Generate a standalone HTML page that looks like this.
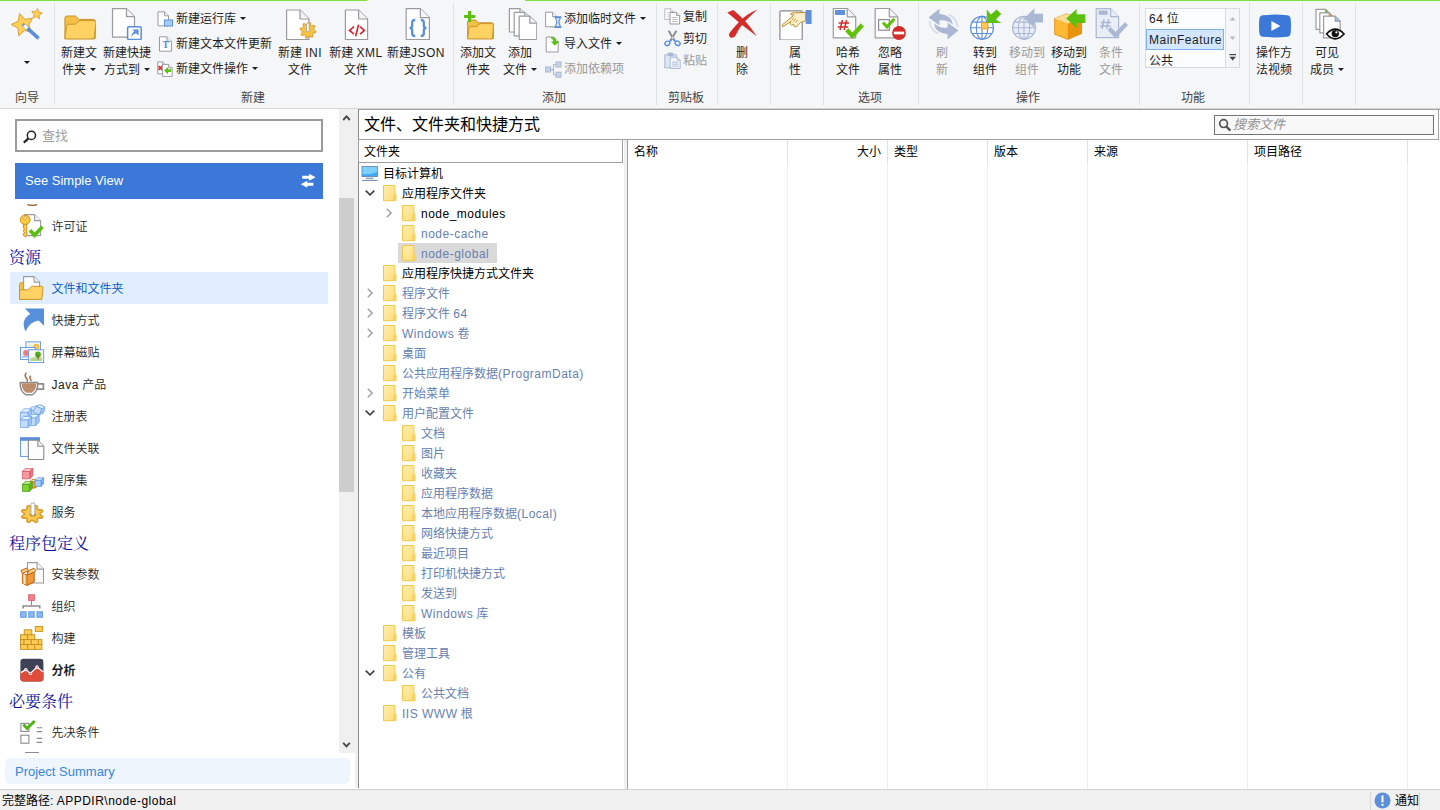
<!DOCTYPE html><html lang="zh-CN"><head><meta charset="utf-8"><title>Advanced Installer</title><style>
*{box-sizing:border-box;margin:0;padding:0}
html,body{width:1440px;height:810px;overflow:hidden;background:#fff}
body{font-family:"Liberation Sans","Noto Sans CJK SC",sans-serif;font-size:12px;color:#1e1e1e;position:relative}
.abs{position:absolute}
i{font-style:normal;letter-spacing:0.5px}
#ribbon{position:absolute;left:0;top:0;width:1440px;height:109px;background:#f5f6f7;border-bottom:1px solid #d4d5d6}
.gl{position:absolute;top:0;height:1px;background:#7fe23c}
.sep{position:absolute;top:3px;width:1px;height:102px;background:#e1e2e4}
.big{position:absolute;top:8px;text-align:center;line-height:17px;font-size:12px;white-space:nowrap;color:#1e1e1e}
.big .ic{display:block;margin:0 auto;height:37px}
.big .ic svg{display:block;margin:0 auto}
.dis{color:#9a9a9a}
.sm{position:absolute;font-size:12px;white-space:nowrap;height:20px;line-height:21px}
.sm svg{position:absolute;left:0;top:2px}
.sm span.t{position:absolute;left:19px;top:0}
.grp{position:absolute;top:90px;height:17px;line-height:17px;font-size:12px;color:#444;text-align:center;white-space:nowrap;transform:translateX(-50%)}
.arr{display:inline-block;width:0;height:0;border-left:3px solid transparent;border-right:3px solid transparent;border-top:3.5px solid #1e1e1e;vertical-align:middle;margin-left:4px;position:relative;top:-1px}
#left{position:absolute;left:0;top:109px;width:355px;height:680px;background:#fff}
#split{position:absolute;left:355px;top:109px;width:3px;height:679px;background:#f0f0f0}
#search{position:absolute;left:15px;top:10px;width:308px;height:33px;border:2px solid #9b9b9b;background:#fff}
#simple{position:absolute;left:15px;top:54px;width:308px;height:36px;background:#3b78d8;color:#fff;font-size:13px;line-height:36px;padding-left:10px}
.li{position:absolute;left:10px;width:318px;height:32px;line-height:34px;font-size:12px;font-weight:350;color:#1e1e1e}
.li svg{position:absolute;left:9px;top:4px}
.li span{position:absolute;left:41.5px;top:0;white-space:nowrap}
.li.sel{background:#e0eefd;color:#0057c0}
.hd{position:absolute;left:9px;font-family:"Liberation Serif","Noto Serif CJK SC",serif;font-size:16px;font-weight:400;color:#10109a;height:24px;line-height:26px;white-space:nowrap}
#sb{position:absolute;left:339px;top:0;width:16px;height:644px;background:#f0f0f0}
#sbthumb{position:absolute;left:0;top:89px;width:15px;height:294px;background:#cdcdcd}
#ps{position:absolute;left:5px;top:649px;width:345px;height:26px;background:#eff5fd;border-radius:5px;color:#3685d8;font-size:13px;line-height:28px;padding-left:10px}
#main{position:absolute;left:358px;top:109px;width:1082px;height:679px;background:#fff;border-left:1px solid #8a8a8a;border-top:1px solid #a0a0a0}
#title{position:absolute;left:5px;top:3px;font-size:16px;line-height:24px;color:#000;white-space:nowrap}
#tbox{position:absolute;left:0;top:0;width:1080px;height:30px;border-right:1px solid #a0a0a0;border-bottom:1px solid #a0a0a0}
#fsearch{position:absolute;left:855px;top:5px;width:220px;height:20px;border:1px solid #747474;background:#f8f8f8;font-size:13px;color:#909090;font-style:italic;line-height:18px}
#fhdr{position:absolute;left:-1px;top:29px;width:265px;height:24px;border:1px solid #a0a0a0;background:#fff;line-height:25px;padding-left:5px;color:#000}
#tree{position:absolute;left:0;top:53px;width:265px;height:626px;background:#fff}
#split2{position:absolute;left:265px;top:30px;width:3px;height:649px;background:#f0f0f0}
.tr{position:absolute;height:20px;line-height:22px;white-space:nowrap;font-size:12px}
.tr svg{position:absolute;top:2px}
.tr span{position:absolute;top:0}
.g{color:#6781b0}
.k{color:#000}
#list{position:absolute;left:268px;top:30px;width:813px;height:649px;background:#fff;border-left:1px solid #a0a0a0}
.col{position:absolute;top:0;height:649px;border-right:1px solid #e8f0fc}
.colh{position:absolute;top:0;height:23px;border-right:1px solid #e2e2e2}
.ch{position:absolute;top:1px;height:22px;line-height:22px;color:#000;white-space:nowrap}
#status{position:absolute;left:0;top:789px;width:1440px;height:21px;background:#f0f0f0;border-top:1px solid #d0d0d0;font-size:12px;line-height:22px;color:#000}
</style></head><body>
<svg width="0" height="0" style="position:absolute"><defs><linearGradient id="fg" x1="0" y1="0" x2="1" y2="1"><stop offset="0" stop-color="#ffeeb0"/><stop offset="1" stop-color="#ffdd78"/></linearGradient></defs></svg>
<div id="ribbon">
<div class="gl" style="left:0;width:367px"></div><div class="gl" style="left:525px;width:915px"></div>
<div class="sep" style="left:54px"></div>
<div class="sep" style="left:453px"></div>
<div class="sep" style="left:656px"></div>
<div class="sep" style="left:717px"></div>
<div class="sep" style="left:770px"></div>
<div class="sep" style="left:823px"></div>
<div class="sep" style="left:918px"></div>
<div class="sep" style="left:1139px"></div>
<div class="sep" style="left:1249px"></div>
<div class="sep" style="left:1302px"></div>
<div class="sep" style="left:1355px"></div>
<div class="big" style="left:0;width:54px"><span class="ic"><svg width="34" height="32" viewBox="0 0 34 32" style=""><polygon points="9.6,5.6 14.8,11.3 22.4,10.3 18.7,17.0 21.9,23.9 14.4,22.5 8.8,27.7 7.9,20.1 1.2,16.4 8.2,13.2" fill="#ffce56" stroke="#d9a13b" stroke-width="1" stroke-linejoin="round"/><polygon points="27.6,0.5 28.7,4.1 32.3,5.0 29.2,7.2 29.4,10.9 26.4,8.7 22.9,10.0 24.1,6.5 21.8,3.5 25.5,3.6" fill="#ffce56" stroke="#d9a13b" stroke-width="0.9" stroke-linejoin="round"/><path d="M14.600,17.800 L28.600,30.400" stroke="#5b8fd9" stroke-width="3.600"/><path d="M13.200,16.600 L17.400,20.400" stroke="#fff" stroke-width="3"/><path d="M12.600,16 L14.200,17.500" stroke="#8a94a8" stroke-width="3.600"/></svg></span><b class="arr" style="position:absolute;left:24px;top:53px;margin:0"></b></div>
<div class="grp" style="left:27px">向导</div>
<div class="big" style="left:44.0px;width:70px"><span class="ic"><svg width="34" height="32" viewBox="0 0 34 32" style=""><g transform="translate(2.300,0.600)"><path d="M0.600,30 V9.400 q0,-2 2,-2 h8 q1,0 1.600,0.800 l2,2.600 H29 q2,0 2,2 V30 z" fill="#f3bf45" stroke="#c9952b" stroke-width="1"/><path d="M0.600,30.400 L2.200,17.400 q.3,-1.800 2.200,-1.800 h6 q1,0 1.800,-.7 l2.400,-2.200 q.8,-.7 1.800,-.7 h13.400 q2.200,0 1.900,2.200 L29.600,30.400 z" fill="#ffd263" stroke="#c9952b" stroke-width="1"/></g></svg></span>新建文<br>件夹<b class="arr"></b></div>
<div class="big" style="left:92.0px;width:70px"><span class="ic"><svg width="32" height="32" viewBox="0 0 32 32" style=""><path d="M1.5,0.7 h14 l8,8 v20.5 h-22 z" fill="#fff" stroke="#9a9aa0" stroke-width="1.2" stroke-linejoin="round"/><path d="M15.5,0.7 v8 h8" fill="#f4f4f4" stroke="#9a9aa0" stroke-width="1.2" stroke-linejoin="round"/><rect x="16.6" y="18.8" width="13.6" height="12.6" rx="1.2" fill="#fff" stroke="#5b8fd9" stroke-width="1.5"/><path d="M27.6,21.4 h-6.2 l2,2 q-3.2,2 -3,5.6 q1.4,-3 4.6,-3.8 l2.6,2.4 z" fill="#5b8fd9"/></svg></span>新建快捷<br>方式到<b class="arr"></b></div>
<div class="sm" style="left:157px;top:9px"><svg width="16" height="16" viewBox="0 0 16 16" style=""><path d="M1,0.8 h6.5 l4,4 v10 h-10.5 z" fill="#fff" stroke="#9a9aa0" stroke-width="1" stroke-linejoin="round"/><path d="M7.5,0.8 v4 h4" fill="#f4f4f4" stroke="#9a9aa0" stroke-width="1" stroke-linejoin="round"/><rect x="7.5" y="9" width="8" height="6" fill="#a8cdf8" stroke="#5b8fd9" stroke-width="1"/></svg><span class="t">新建运行库<b class="arr"></b></span></div>
<div class="sm" style="left:157px;top:34px"><svg width="16" height="16" viewBox="0 0 16 16" style=""><path d="M2.5,0.8 h7.5 l4.5,4.5 v9.9 h-12 z" fill="#fff" stroke="#9a9aa0" stroke-width="1" stroke-linejoin="round"/><path d="M10.0,0.8 v4.5 h4.5" fill="#f4f4f4" stroke="#9a9aa0" stroke-width="1" stroke-linejoin="round"/><text x="8.6" y="12.4" font-family="Liberation Serif,serif" font-weight="bold" font-size="9.5" fill="#4a86e0" text-anchor="middle">T</text></svg><span class="t">新建文本文件更新</span></div>
<div class="sm" style="left:157px;top:59px"><svg width="16" height="16" viewBox="0 0 16 16" style=""><path d="M0.7,0.8 h5 l3,3 v9 h-8 z" fill="#fff" stroke="#9a9aa0" stroke-width="1" stroke-linejoin="round"/><path d="M5.699999999999999,0.8 v3 h3" fill="#f4f4f4" stroke="#9a9aa0" stroke-width="1" stroke-linejoin="round"/><path d="M1.5,5 l3.5,4 M1.5,9 l3.5,-4" stroke="#e0202c" stroke-width="1.6"/><path d="M5.6,3.4 h6.1 l3.5,3.5 v8.5 h-9.6 z" fill="#fff" stroke="#9a9aa0" stroke-width="1" stroke-linejoin="round"/><path d="M11.7,3.4 v3.5 h3.5" fill="#f4f4f4" stroke="#9a9aa0" stroke-width="1" stroke-linejoin="round"/><path d="M7,9.6 l4,-3.6 v2.2 h3.2 v2.8 h-3.2 v2.2 z" fill="#5cc011"/></svg><span class="t">新建文件操作<b class="arr"></b></span></div>
<div class="big" style="left:265.0px;width:70px"><span class="ic"><svg width="34" height="32" viewBox="0 0 34 32" style=""><g transform="translate(1,0)"><path d="M2.6,2 h13.399999999999999 l9,9 v20.5 h-22.4 z" fill="#fff" stroke="#9a9aa0" stroke-width="1.2" stroke-linejoin="round"/><path d="M16.0,2 v9 h9" fill="#f4f4f4" stroke="#9a9aa0" stroke-width="1.2" stroke-linejoin="round"/><polygon points="32.0,23.2 31.7,24.7 29.1,25.1 28.5,26.1 29.1,28.6 27.8,29.5 25.7,28.0 24.6,28.2 23.2,30.4 21.7,30.1 21.3,27.5 20.3,26.9 17.8,27.5 16.9,26.2 18.4,24.1 18.2,23.0 16.0,21.6 16.3,20.1 18.9,19.7 19.5,18.7 18.9,16.2 20.2,15.3 22.3,16.8 23.4,16.6 24.8,14.4 26.3,14.7 26.7,17.3 27.7,17.9 30.2,17.3 31.1,18.6 29.6,20.7 29.8,21.8" fill="#f6c244" stroke="#cf9a2a" stroke-width="0.9" stroke-linejoin="round"/><rect x="22.6" y="15" width="2.6" height="8.6" rx="1" fill="#fff" stroke="#9a9aa0" stroke-width="0.8"/></g></svg></span>新建 <i>INI</i><br>文件</div>
<div class="big" style="left:321.0px;width:70px"><span class="ic"><svg width="32" height="32" viewBox="0 0 32 32" style=""><path d="M5.4,2 h13.2 l9,9 v20.5 h-22.2 z" fill="#fff" stroke="#9a9aa0" stroke-width="1.2" stroke-linejoin="round"/><path d="M18.6,2 v9 h9" fill="#f4f4f4" stroke="#9a9aa0" stroke-width="1.2" stroke-linejoin="round"/><path d="M14,18.6 l-4.4,3.8 l4.4,3.8 M20,18.6 l4.4,3.8 l-4.4,3.8 M18.6,16.6 l-3,11.6" fill="none" stroke="#d42a35" stroke-width="1.7"/></svg></span>新建 <i>XML</i><br>文件</div>
<div class="big" style="left:381.0px;width:70px"><span class="ic"><svg width="32" height="32" viewBox="0 0 32 32" style=""><path d="M6.2,0.6 h14.2 l9,9 v21.9 h-23.2 z" fill="#fff" stroke="#9a9aa0" stroke-width="1.2" stroke-linejoin="round"/><path d="M20.4,0.6 v9 h9" fill="#f4f4f4" stroke="#9a9aa0" stroke-width="1.2" stroke-linejoin="round"/><path d="M15.2,12 q-3,0 -3,2.6 v3 q0,2.2 -2.6,2.4 q2.6,.2 2.6,2.4 v3 q0,2.6 3,2.6 M20.8,12 q3,0 3,2.6 v3 q0,2.2 2.6,2.4 q-2.6,.2 -2.6,2.4 v3 q0,2.6 -3,2.6" fill="none" stroke="#5b8fd9" stroke-width="2.3"/></svg></span>新建<i>JSON</i><br>文件</div>
<div class="grp" style="left:253px">新建</div>
<div class="big" style="left:443.0px;width:70px"><span class="ic"><svg width="32" height="32" viewBox="0 0 32 32" style=""><path d="M5.6,30.6 V14 q0,-2 2,-2 h5.4 q1,0 1.6,0.8 l1.6,2 H29.6 q2,0 2,2 V30.6 z" fill="#f3bf45" stroke="#c9952b" stroke-width="1"/><path d="M5.6,30.9 L7,20.2 q.3,-1.6 2,-1.6 h4.4 q1,0 1.8,-.7 l1.8,-1.6 q.8,-.7 1.8,-.7 h11 q2,0 1.8,2 L30.4,30.9 z" fill="#ffd263" stroke="#c9952b" stroke-width="1"/><path d="M7.6,3 v11 M2.1,8.5 h11" stroke="#5cc011" stroke-width="3.2"/></svg></span>添加文<br>件夹</div>
<div class="big" style="left:485.0px;width:70px"><span class="ic"><svg width="34" height="32" viewBox="0 0 34 32" style=""><g transform="translate(1,0)"><path d="M5.4,0.6 h10.600000000000001 l7,7 v16.4 h-17.6 z" fill="#fff" stroke="#9a9aa0" stroke-width="1.2" stroke-linejoin="round"/><path d="M16.0,0.6 v7 h7" fill="#f4f4f4" stroke="#9a9aa0" stroke-width="1.2" stroke-linejoin="round"/><path d="M10.2,4.4 h10.600000000000001 l7,7 v16.4 h-17.6 z" fill="#fff" stroke="#9a9aa0" stroke-width="1.2" stroke-linejoin="round"/><path d="M20.8,4.4 v7 h7" fill="#f4f4f4" stroke="#9a9aa0" stroke-width="1.2" stroke-linejoin="round"/><path d="M15.2,8.2 h10.600000000000001 l7,7 v16.4 h-17.6 z" fill="#fff" stroke="#9a9aa0" stroke-width="1.2" stroke-linejoin="round"/><path d="M25.799999999999997,8.2 v7 h7" fill="#f4f4f4" stroke="#9a9aa0" stroke-width="1.2" stroke-linejoin="round"/></g></svg></span>添加<br>文件<b class="arr"></b></div>
<div class="sm" style="left:545px;top:9px"><svg width="17" height="17" viewBox="0 0 17 17" style=""><path d="M0.6,1.2 h7.0 l4.5,4.5 v10.1 h-11.5 z" fill="#fff" stroke="#9a9aa0" stroke-width="1" stroke-linejoin="round"/><path d="M7.6,1.2 v4.5 h4.5" fill="#f4f4f4" stroke="#9a9aa0" stroke-width="1" stroke-linejoin="round"/><path d="M9.4,6 h7 M9.4,16.4 h7" stroke="#5b8fd9" stroke-width="1.6"/><path d="M10.4,6.6 h5 l-1.6,4.4 l1.6,4.8 h-5 l1.6,-4.8 z" fill="#dbe9fb" stroke="#5b8fd9" stroke-width="1.1"/></svg><span class="t">添加临时文件<b class="arr"></b></span></div>
<div class="sm" style="left:545px;top:34px"><svg width="17" height="17" viewBox="0 0 17 17" style=""><path d="M1.2,1 h7.5 l4.5,4.5 v10.5 h-12 z" fill="#fff" stroke="#9a9aa0" stroke-width="1" stroke-linejoin="round"/><path d="M8.7,1 v4.5 h4.5" fill="#f4f4f4" stroke="#9a9aa0" stroke-width="1" stroke-linejoin="round"/><path d="M6,1 q5,0 5.4,4.4 h2.8 l-4.2,4.4 l-4.2,-4.4 h2.8 q-.2,-2.4 -2.6,-3 z" fill="#5cc011"/></svg><span class="t">导入文件<b class="arr"></b></span></div>
<div class="sm dis" style="left:545px;top:59px"><svg width="17" height="17" viewBox="0 0 17 17" style=""><path d="M5.5,8.6 h3 M8.5,3.4 v10.6 M8.5,3.6 h3 M8.5,13.8 h3" fill="none" stroke="#aab8d3" stroke-width="1.1"/><rect x="0.6" y="6" width="5" height="5" fill="#c6d2e6" stroke="#aab8d3"/><rect x="11" y="1" width="5" height="5" fill="#c6d2e6" stroke="#aab8d3"/><rect x="11" y="11.2" width="5" height="5" fill="#c6d2e6" stroke="#aab8d3"/></svg><span class="t">添加依赖项</span></div>
<div class="grp" style="left:554px">添加</div>
<div class="sm" style="left:664px;top:7px"><svg width="17" height="17" viewBox="0 0 17 17" style="top:0.500px"><path d="M0.8,0.8 h6 l3,3 v7.6 h-9 z" fill="#fff" stroke="#b9b9be" stroke-width="1" stroke-linejoin="round"/><path d="M6.800000000000001,0.8 v3 h3" fill="#f4f4f4" stroke="#b9b9be" stroke-width="1" stroke-linejoin="round"/><path d="M3,4.6h3 M3,6.8h5 M3,9h5" stroke="#c8c8cc" stroke-width="0.8"/><path d="M6,4.4 h6.6 l3,3 v8.6 h-9.6 z" fill="#fff" stroke="#9a9aa0" stroke-width="1" stroke-linejoin="round"/><path d="M12.6,4.4 v3 h3" fill="#f4f4f4" stroke="#9a9aa0" stroke-width="1" stroke-linejoin="round"/><path d="M8.2,9.6h5.4 M8.2,11.6h5.4 M8.2,13.6h5.4" stroke="#a6a6aa" stroke-width="0.8"/></svg><span class="t">复制</span></div>
<div class="sm" style="left:664px;top:29px"><svg width="17" height="17" viewBox="0 0 17 17" style="top:0.500px"><path d="M4.600,0.800 L10.400,10.600 M12.400,0.800 L6.600,10.600" stroke="#8e8e8e" stroke-width="2" fill="none"/><rect x="7.300" y="6.400" width="2.400" height="2.400" fill="#f5f6f7" stroke="#8e8e8e" stroke-width="0.600"/><ellipse cx="3.400" cy="13.300" rx="2.600" ry="2.100" fill="none" stroke="#4a86e0" stroke-width="1.300" transform="rotate(-30 3.400 13.300)"/><ellipse cx="13.600" cy="13.300" rx="2.600" ry="2.100" fill="none" stroke="#4a86e0" stroke-width="1.300" transform="rotate(30 13.600 13.300)"/><path d="M5.400,11.700 L7.200,9.800 M11.600,11.700 L9.800,9.800" stroke="#4a86e0" stroke-width="1.300"/></svg><span class="t">剪切</span></div>
<div class="sm dis" style="left:664px;top:51px"><svg width="17" height="17" viewBox="0 0 17 17" style="top:0.500px"><rect x="0.800" y="2.800" width="11.400" height="13" fill="#dde6f4" stroke="#aab8d3"/><rect x="3.800" y="0.600" width="5.400" height="3.600" fill="#aab8d3"/><path d="M6.2,5.2 h7 l3,3 v8.2 h-10 z" fill="#f3f6fb" stroke="#aab8d3" stroke-width="1" stroke-linejoin="round"/><path d="M13.2,5.2 v3 h3" fill="#f3f6fb" stroke="#aab8d3" stroke-width="1" stroke-linejoin="round"/><path d="M8.200,10.200h6 M8.200,12.200h6 M8.200,14.200h6" stroke="#aab8d3" stroke-width="0.900"/></svg><span class="t">粘贴</span></div>
<div class="grp" style="left:686px">剪贴板</div>
<div class="big" style="left:707.0px;width:70px"><span class="ic"><svg width="34" height="32" viewBox="0 0 34 32" style=""><g transform="translate(1,0)"><path d="M1.300,4.400 L7.200,2 Q20,12 30.800,28.200 Q16,17.400 1.300,4.400 z" fill="#d42b2b"/><path d="M31.500,1.400 Q20,6 12.500,14.500 Q6,21.500 3.200,25.500 Q2.400,29.200 5.400,29.800 Q9,29.600 10.400,26 Q14,16.500 31.500,1.400 z" fill="#d42b2b"/></g></svg></span>删<br>除</div>
<div class="big" style="left:760.0px;width:70px"><span class="ic"><svg width="36" height="32" viewBox="0 0 36 32" style=""><rect x="2.900" y="2.900" width="22.300" height="29.200" rx="1.200" fill="#fff" stroke="#8a8a90" stroke-width="1.200"/><path d="M28.700,4.300 L14.600,5 L13.600,6.400 L17,7.200 L5.400,16.800 Q4.400,18.400 6,18.700 L13.600,13.600 L13,15.600 L14.600,17.100 L16.600,16.200 L17,18.200 L18.800,18.900 L21,17.200 L23.600,14.500 L28.700,12.900 z" fill="#fdeecb" stroke="#b5851a" stroke-width="0.900" stroke-linejoin="round"/><path d="M14.400,12.600 l2.600,-3 M16.400,13.600 l2.400,-2.800 M18.600,14.400 l1.800,-2.200" stroke="#b5851a" stroke-width="0.800" fill="none"/><rect x="28.700" y="2" width="5.900" height="14" fill="#6391d9"/></svg></span>属<br>性</div>
<div class="big" style="left:813.0px;width:70px"><span class="ic"><svg width="34" height="32" viewBox="0 0 34 32" style=""><g transform="translate(1,0)"><path d="M1.3,0.4 h13.899999999999999 l8.5,8.5 v20.9 h-22.4 z" fill="#fff" stroke="#9a9aa0" stroke-width="1.2" stroke-linejoin="round"/><path d="M15.2,0.4 v8.5 h8.5" fill="#f4f4f4" stroke="#9a9aa0" stroke-width="1.2" stroke-linejoin="round"/><rect x="3" y="2" width="10" height="5" fill="#6391d9"/><path d="M10.400,12 l-2.400,10 M14.600,12 l-2.400,10 M6.600,15 h10.400 M5.800,19 h10.400" stroke="#d42a2a" stroke-width="1.500" fill="none"/><path d="M13.100,23.300 L16.400,20.200 L20.400,24.600 L28.800,15.300 L31.900,18.400 L20.400,30.900 z" fill="#62c10a"/></g></svg></span>哈希<br>文件</div>
<div class="big" style="left:855.0px;width:70px"><span class="ic"><svg width="34" height="32" viewBox="0 0 34 32" style=""><g transform="translate(1,0)"><path d="M1.2,0.4 h14.100000000000001 l8.5,8.5 v20.9 h-22.6 z" fill="#fff" stroke="#9a9aa0" stroke-width="1.2" stroke-linejoin="round"/><path d="M15.3,0.4 v8.5 h8.5" fill="#f4f4f4" stroke="#9a9aa0" stroke-width="1.2" stroke-linejoin="round"/><rect x="4.600" y="11.600" width="10.800" height="10.600" fill="#fff" stroke="#8a8a90" stroke-width="1.200"/><path d="M7.900,15.600 l2.100,-2.100 l2.900,3.100 l6.500,-6.800 l2.100,2.100 l-8.600,9.300 z" fill="#62c10a"/><circle cx="25" cy="25" r="6.900" fill="#d42b2b"/><rect x="19.800" y="23.600" width="10.400" height="2.800" fill="#fff"/></g></svg></span>忽略<br>属性</div>
<div class="grp" style="left:870px">选项</div>
<div class="big dis" style="left:907.0px;width:70px"><span class="ic"><svg width="34" height="32" viewBox="0 0 34 32" style=""><g transform="translate(1,0)"><path d="M13.4,0.8 L2.6,9.4 L13.4,17.6 V12.4 q8,-1 13.6,4.4 q-1,-9.6 -13.6,-11 z" fill="#aab8d3"/><path d="M21.6,31.2 L32.4,22.6 L21.6,14.4 V19.6 q-8,1 -13.6,-4.4 q1,9.6 13.6,11 z" fill="#aab8d3"/><path d="M3.4,13 q1,9 9,12.6 M31.6,19 q-1,-9 -9,-12.6" fill="none" stroke="#d7deeb" stroke-width="2"/></g></svg></span>刷<br>新</div>
<div class="big" style="left:950.0px;width:70px"><span class="ic"><svg width="34" height="32" viewBox="0 0 34 32" style=""><g transform="translate(1,0)"><circle cx="13" cy="19.8" r="11.4" fill="#fff" stroke="#5b8fd9" stroke-width="1.3"/><ellipse cx="13" cy="19.8" rx="5.7" ry="11.4" fill="none" stroke="#5b8fd9" stroke-width="1.1"/><path d="M13,8.4 v22.8 M1.5999999999999996,19.8 h22.8 M3.2,14.1 h19.6 M3.2,25.5 h19.6" stroke="#5b8fd9" stroke-width="1.1" fill="none"/><rect x="12.4" y="14.6" width="6.6" height="6.4" fill="#ffc64d" stroke="#e09a1e" stroke-width="0.8"/><path d="M27.6,1.4 l4.6,4.6 l-5.4,5.4 l5.6,3.6 h-14.6 v-13.4 l4.2,5 z" fill="#5cc011"/></g></svg></span>转到<br>组件</div>
<div class="big dis" style="left:992.0px;width:70px"><span class="ic"><svg width="34" height="32" viewBox="0 0 34 32" style=""><g transform="translate(1,0)"><circle cx="13" cy="19.8" r="11.4" fill="#e8edf6" stroke="#aab8d3" stroke-width="1.3"/><ellipse cx="13" cy="19.8" rx="5.7" ry="11.4" fill="none" stroke="#aab8d3" stroke-width="1.1"/><path d="M13,8.4 v22.8 M1.5999999999999996,19.8 h22.8 M3.2,14.1 h19.6 M3.2,25.5 h19.6" stroke="#aab8d3" stroke-width="1.1" fill="none"/><path d="M23.4,0.6 v5.2 h8.6 v8.8 h-8.6 v5.2 l-10.4,-9.6 z" fill="#aab8d3"/></g></svg></span>移动到<br>组件</div>
<div class="big" style="left:1034.0px;width:70px"><span class="ic"><svg width="34" height="32" viewBox="0 0 34 32" style=""><g transform="translate(1,0)"><path d="M1.6,10.6 L13.4,5.8 L28.6,10 V25.6 L14.8,31.4 L1.6,26.2 z" fill="#ffb833" stroke="#d98b14" stroke-width="0.8" stroke-linejoin="round"/><path d="M14.8,15.6 L28.6,10 V25.6 L14.8,31.4 z" fill="#e8940f"/><path d="M1.6,10.6 L13.4,5.8 L28.6,10 L14.8,15.6 z" fill="#ffdc96"/><path d="M23.6,1 v5.2 h8.8 v8.8 h-8.8 v5.2 l-10.4,-9.6 z" fill="#5cc011"/></g></svg></span>移动到<br>功能</div>
<div class="big dis" style="left:1076.0px;width:70px"><span class="ic"><svg width="34" height="32" viewBox="0 0 34 32" style=""><g transform="translate(1,0)"><path d="M1.2,0.6 h14.399999999999999 l8,8 v21 h-22.4 z" fill="#e8edf6" stroke="#aab8d3" stroke-width="1.2" stroke-linejoin="round"/><path d="M15.599999999999998,0.6 v8 h8" fill="#e8edf6" stroke="#aab8d3" stroke-width="1.2" stroke-linejoin="round"/><rect x="3.6" y="2.6" width="9" height="4.2" fill="#aab8d3"/><path d="M9,11.4 l-2,9.6 M13.6,11.4 l-2,9.6 M5.6,14.4 h10.4 M5,18 h10.4" stroke="#aab8d3" stroke-width="1.5" fill="none"/><path d="M12.6,22 l3,-3 l5,5 l9.4,-10 l3,3 l-12.4,13.6 z" fill="#aab8d3"/></g></svg></span>条件<br>文件</div>
<div class="grp" style="left:1028px">操作</div>
<div class="abs" style="left:1145px;top:8px;width:95px;height:60px;border:1px solid #d9dadd;background:#fbfcfd"></div>
<div class="abs" style="left:1225px;top:8px;width:15px;height:60px;border:1px solid #d9dadd;background:#f5f6f7"></div>
<div class="abs" style="left:1149px;top:10px;font-size:12px;line-height:18px;white-space:nowrap"><i>64</i> 位</div>
<div class="abs" style="left:1146px;top:29px;width:78px;height:21px;background:#d3e6fc;border:1px solid #7db2ee"></div>
<div class="abs" style="left:1149px;top:31px;font-size:12px;line-height:18px;white-space:nowrap"><i>MainFeature</i></div>
<div class="abs" style="left:1149px;top:52px;font-size:12px;line-height:18px;white-space:nowrap;height:15px;overflow:hidden">公共</div>
<svg class="abs" style="left:1226px;top:9px" width="14" height="59" viewBox="0 0 14 59"><path d="M3.600,11.400 h6 l-3,-3.400 z M3.600,27.600 h6 l-3,3.400 z" fill="#b9bcc2"/><path d="M3.400,45.600 h6.600" stroke="#444" stroke-width="1.2"/><path d="M3.400,47.800 h6.600 l-3.300,3.800 z" fill="#444"/></svg>
<div class="grp" style="left:1193px">功能</div>
<div class="big" style="left:1239.0px;width:70px"><span class="ic"><svg width="36" height="32" viewBox="0 0 36 32" style=""><g transform="translate(2,0)"><path d="M5,7.200 q12,-1.200 24,0 q3.200,.4 3.600,3.400 q.8,7.400 0,14.800 q-.4,3 -3.600,3.400 q-12,1.200 -24,0 q-3.200,-.4 -3.600,-3.400 q-.8,-7.400 0,-14.800 q.4,-3 3.600,-3.400 z" fill="#3b78d8"/><path d="M13.400,13 l9,5 l-9,5 z" fill="#fff"/></g></svg></span>操作方<br>法视频</div>
<div class="big" style="left:1292.0px;width:70px"><span class="ic"><svg width="36" height="32" viewBox="0 0 36 32" style=""><g transform="translate(2,0)"><path d="M5,1.4 h9.6 l4,4 v16 h-13.6 z" fill="#fff" stroke="#9a9aa0" stroke-width="1.2" stroke-linejoin="round"/><path d="M14.600000000000001,1.4 v4 h4" fill="#5cc011" stroke="#9a9aa0" stroke-width="1.2" stroke-linejoin="round"/><path d="M8.8,4.8 h9.6 l4,4 v16 h-13.6 z" fill="#fff" stroke="#9a9aa0" stroke-width="1.2" stroke-linejoin="round"/><path d="M18.4,4.8 v4 h4" fill="#f0a030" stroke="#9a9aa0" stroke-width="1.2" stroke-linejoin="round"/><path d="M12.6,8.2 h11.600000000000001 l5,5 v16.6 h-16.6 z" fill="#fff" stroke="#9a9aa0" stroke-width="1.2" stroke-linejoin="round"/><path d="M24.200000000000003,8.2 v5 h5" fill="#9dc3f5" stroke="#9a9aa0" stroke-width="1.2" stroke-linejoin="round"/><path d="M15.600,26 q8.600,-9.600 17.400,0 q-8.800,9.600 -17.400,0 z" fill="#fff" stroke="#111" stroke-width="1.700"/><circle cx="24.300" cy="25.600" r="3.700" fill="#111"/><circle cx="25.400" cy="24.400" r="1.100" fill="#fff"/></g></svg></span>可见<br>成员<b class="arr"></b></div>
</div>
<div id="split"></div><div id="left">
<div id="search"><svg class="abs" style="left:5px;top:8px" width="16" height="16" viewBox="0 0 16 16"><circle cx="9.400" cy="6.400" r="4.100" fill="none" stroke="#222" stroke-width="1.500"/><path d="M6.200,9.600 L1.800,13.600" stroke="#222" stroke-width="2.200"/></svg><span class="abs" style="left:25px;top:0;line-height:29px;font-size:13px;color:#a0a0a0">查找</span></div>
<div id="simple">See Simple View<svg class="abs" style="left:284px;top:8px" width="20" height="20" viewBox="0 0 20 20"><path d="M3.200,4.700 h6.900 v-2 l6.600,3.500 l-6.600,3.500 v-2 h-6.900 z M14.300,11.700 h-6 v-2 l-6.600,3.500 l6.600,3.500 v-2 h6 z" fill="#fff"/></svg></div>
<div class="abs" style="left:0;top:90px;width:339px;height:558px;overflow:hidden">
<div class="li" style="top:-21px"><svg width="26" height="24" viewBox="0 0 26 24" style=""><path d="M8.5,22.6 q5,1.6 9.6,0" stroke="#8a5a2b" stroke-width="1.2" fill="none"/></svg><span></span></div>
<div class="li" style="top:11px"><svg width="26" height="24" viewBox="0 0 26 24" style=""><path d="M5.4,0.6 h10.2 l6,6 v15 h-16.2 z" fill="#fff" stroke="#9a9aa0" stroke-width="1.1" stroke-linejoin="round"/><path d="M15.600000000000001,0.6 v6 h6" fill="#f4f4f4" stroke="#9a9aa0" stroke-width="1.1" stroke-linejoin="round"/><path d="M4.400,9.600 h3.400 v12 l-1.600,1.400 l-1.800,-1.600 v-1.600 l1.200,-1 l-1.200,-1.200 v-1.400 l1.200,-1 l-1.200,-1.200 z" fill="#ffc940" stroke="#c98f1a" stroke-width="0.900" stroke-linejoin="round"/><ellipse cx="6.200" cy="5.800" rx="4.900" ry="4.700" fill="#ffc940" stroke="#c98f1a" stroke-width="1"/><circle cx="6.200" cy="4" r="1.400" fill="#fff" stroke="#c98f1a" stroke-width="0.700"/><path d="M9.600,17.600 l2.600,-2.600 l3.400,3.600 l6.600,-7.200 l2.600,2.600 l-9.200,10 z" fill="#5cc011"/></svg><span>许可证</span></div>
<div class="hd" style="top:46px">资源</div>
<div class="li sel" style="top:73px"><svg width="26" height="24" viewBox="0 0 26 24" style=""><path d="M0.600,23.400 V8.400 q0,-1.800 1.800,-1.800 h3.600 V23.400 z" fill="#f3bf45" stroke="#c9952b" stroke-width="1"/><path d="M4.6,0.6 h10.5 l5.5,5.5 v12.5 h-16 z" fill="#fff" stroke="#9a9aa0" stroke-width="1.1" stroke-linejoin="round"/><path d="M15.100000000000001,0.6 v5.5 h5.5" fill="#f4f4f4" stroke="#9a9aa0" stroke-width="1.1" stroke-linejoin="round"/><path d="M0.600,23.400 V15.400 q0,-1.600 1.600,-1.600 h6 q1,0 1.600,-.700 l1.900,-2.100 q.600,-.700 1.600,-.700 h9.200 q1.800,0 1.500,1.800 L22.800,23.400 z" fill="#ffd263" stroke="#c9952b" stroke-width="1" stroke-linejoin="round"/></svg><span>文件和文件夹</span></div>
<div class="li" style="top:105px"><svg width="26" height="24" viewBox="0 0 26 24" style=""><path d="M5.800,0.400 H25 V17.800 L19.600,12.600 Q10.400,14 6.600,23.600 Q1,12 11.400,6 z" fill="#5590d9"/></svg><span>快捷方式</span></div>
<div class="li" style="top:137px"><svg width="26" height="24" viewBox="0 0 26 24" style=""><rect x="6.9" y="1.9" width="14.7" height="11.5" fill="#fff" stroke="#5b8fd9" stroke-width="0.900"/><rect x="8.400" y="3.400" width="11.700" height="8.500" fill="#eef3da"/><circle cx="17.400" cy="6.600" r="2.900" fill="#f8b43a"/><circle cx="17.400" cy="6.600" r="1.600" fill="#fdd277"/><rect x="1.5" y="7.4" width="14.7" height="12" fill="#fff" stroke="#5b8fd9" stroke-width="0.900"/><rect x="3" y="8.900" width="11.700" height="9" fill="#e9f1fc"/><circle cx="7" cy="13" r="2.900" fill="#ee7d80"/><circle cx="10.800" cy="12" r="2" fill="#fbd05e"/><rect x="3" y="16" width="6" height="1.600" fill="#9fc6f5"/><rect x="9.7" y="9.8" width="15" height="12.8" fill="#fff" stroke="#5b8fd9" stroke-width="0.900"/><rect x="11.200" y="11.300" width="12" height="9.800" fill="#f4f8ec"/><path d="M11.200,18.400 q6,-2.600 12,-0.600 v3.300 h-12 z" fill="#b9d48e"/><circle cx="19" cy="14.400" r="2.900" fill="#4fae22"/><path d="M19,15 v4.600" stroke="#8a5a2b" stroke-width="1.100"/></svg><span>屏幕磁贴</span></div>
<div class="li" style="top:169px"><svg width="26" height="24" viewBox="0 0 26 24" style=""><path d="M18,11.800 h6.400 v5.400 h-7.600" fill="none" stroke="#8c8c8c" stroke-width="1.700"/><path d="M1.200,10.400 h17.600 q.4,9 -5.600,12.400 h-6.400 q-6,-3.400 -5.600,-12.400 z" fill="#fff" stroke="#8c8c8c" stroke-width="1.500" stroke-linejoin="round"/><path d="M2.600,11.200 h14.800 q0,6.800 -4.800,9.600 h-5.200 q-4.800,-2.800 -4.800,-9.600 z" fill="#bd8c6c"/><path d="M7.400,0.600 q-2.400,3 0,5.400 q1.800,2 .4,3.600 M11.600,3.600 q-1.400,2 0,3.600 q.8,1 .2,2" fill="none" stroke="#a5714d" stroke-width="1.500"/></svg><span><i>Java</i> 产品</span></div>
<div class="li" style="top:201px"><svg width="26" height="24" viewBox="0 0 26 24" style=""><path d="M9,6.4 l3.6,-3.6 h7.6 l-3.6,3.6 z" fill="#e6f1fd" stroke="#6fa6e8" stroke-width="0.8" stroke-linejoin="round"/><path d="M16.6,6.4 l3.6,-3.6 v7.6 l-3.6,3.6 z" fill="#9ec4f3" stroke="#6fa6e8" stroke-width="0.8" stroke-linejoin="round"/><rect x="9" y="6.4" width="7.6" height="7.6" fill="#c4dcf9" stroke="#6fa6e8" stroke-width="0.8" stroke-linejoin="round"/><path d="M1.4,8.4 l3.6,-3.6 h7.6 l-3.6,3.6 z" fill="#e6f1fd" stroke="#6fa6e8" stroke-width="0.8" stroke-linejoin="round"/><path d="M9.0,8.4 l3.6,-3.6 v7.6 l-3.6,3.6 z" fill="#9ec4f3" stroke="#6fa6e8" stroke-width="0.8" stroke-linejoin="round"/><rect x="1.4" y="8.4" width="7.6" height="7.6" fill="#c4dcf9" stroke="#6fa6e8" stroke-width="0.8" stroke-linejoin="round"/><path d="M9,14 l3.6,-3.6 h7.6 l-3.6,3.6 z" fill="#e6f1fd" stroke="#6fa6e8" stroke-width="0.8" stroke-linejoin="round"/><path d="M16.6,14 l3.6,-3.6 v7.6 l-3.6,3.6 z" fill="#9ec4f3" stroke="#6fa6e8" stroke-width="0.8" stroke-linejoin="round"/><rect x="9" y="14" width="7.6" height="7.6" fill="#c4dcf9" stroke="#6fa6e8" stroke-width="0.8" stroke-linejoin="round"/><path d="M1.4,16 l3.6,-3.6 h7.6 l-3.6,3.6 z" fill="#e6f1fd" stroke="#6fa6e8" stroke-width="0.8" stroke-linejoin="round"/><path d="M9.0,16 l3.6,-3.6 v7.6 l-3.6,3.6 z" fill="#9ec4f3" stroke="#6fa6e8" stroke-width="0.8" stroke-linejoin="round"/><rect x="1.4" y="16" width="7.6" height="7.6" fill="#c4dcf9" stroke="#6fa6e8" stroke-width="0.8" stroke-linejoin="round"/><g transform="rotate(24 19.600 6)"><path d="M15.4,3.6 l3,-3 h6.6 l-3,3 z" fill="#e6f1fd" stroke="#6fa6e8" stroke-width="0.8" stroke-linejoin="round"/><path d="M22.0,3.6 l3,-3 v6.6 l-3,3 z" fill="#9ec4f3" stroke="#6fa6e8" stroke-width="0.8" stroke-linejoin="round"/><rect x="15.4" y="3.6" width="6.6" height="6.6" fill="#c4dcf9" stroke="#6fa6e8" stroke-width="0.8" stroke-linejoin="round"/></g></svg><span>注册表</span></div>
<div class="li" style="top:233px"><svg width="26" height="24" viewBox="0 0 26 24" style=""><rect x="1.400" y="1.900" width="19" height="18.500" fill="#f6f9fe" stroke="#5b8fd9" stroke-width="0.900"/><rect x="1" y="1.400" width="19.800" height="3.400" fill="#5b8fd9"/><path d="M9.4,4.2 h9.4 l6,6 v13.3 h-15.4 z" fill="#fdfdfd" stroke="#8c8c90" stroke-width="1.1" stroke-linejoin="round"/><path d="M18.8,4.2 v6 h6" fill="#f0f0f0" stroke="#8c8c90" stroke-width="1.1" stroke-linejoin="round"/></svg><span>文件关联</span></div>
<div class="li" style="top:265px"><svg width="26" height="24" viewBox="0 0 26 24" style=""><path d="M3.4,3.4 l3,-3 h7.4 l-3,3 z" fill="#fbd3d6" stroke="#d9525f" stroke-width="0.8" stroke-linejoin="round"/><path d="M10.8,3.4 l3,-3 v7.4 l-3,3 z" fill="#ea7682" stroke="#d9525f" stroke-width="0.8" stroke-linejoin="round"/><rect x="3.4" y="3.4" width="7.4" height="7.4" fill="#f59aa2" stroke="#d9525f" stroke-width="0.8" stroke-linejoin="round"/><path d="M10.4,14 l2.6,-2.6 h6 l-2.6,2.6 z" fill="#fcd9a0" stroke="#c47508" stroke-width="0.8" stroke-linejoin="round"/><path d="M16.4,14 l2.6,-2.6 v6 l-2.6,2.6 z" fill="#e08a14" stroke="#c47508" stroke-width="0.8" stroke-linejoin="round"/><rect x="10.4" y="14" width="6" height="6" fill="#f5a030" stroke="#c47508" stroke-width="0.8" stroke-linejoin="round"/><path d="M16,12.4 l2.6,-2.6 h6 l-2.6,2.6 z" fill="#dcebfc" stroke="#5b96e6" stroke-width="0.8" stroke-linejoin="round"/><path d="M22,12.4 l2.6,-2.6 v6 l-2.6,2.6 z" fill="#7fb0f0" stroke="#5b96e6" stroke-width="0.8" stroke-linejoin="round"/><rect x="16" y="12.4" width="6" height="6" fill="#a8cdf8" stroke="#5b96e6" stroke-width="0.8" stroke-linejoin="round"/><path d="M3.4,16.4 l2.8,-2.8 h7 l-2.8,2.8 z" fill="#c9ec9c" stroke="#4aa010" stroke-width="0.8" stroke-linejoin="round"/><path d="M10.4,16.4 l2.8,-2.8 v7 l-2.8,2.8 z" fill="#5cb81c" stroke="#4aa010" stroke-width="0.8" stroke-linejoin="round"/><rect x="3.4" y="16.4" width="7" height="7" fill="#7fd136" stroke="#4aa010" stroke-width="0.8" stroke-linejoin="round"/></svg><span>程序集</span></div>
<div class="li" style="top:297px"><svg width="26" height="24" viewBox="0 0 26 24" style=""><path d="M23.7,16.6 L22.9,18.1 L19.4,18.1 L18.3,18.9 L18.4,21.8 L16.4,22.4 L14.0,20.4 L12.4,20.4 L10.0,22.4 L8.0,21.8 L8.1,18.9 L7.0,18.1 L3.5,18.1 L2.7,16.6 L5.2,14.6 L5.2,13.4 L2.7,11.4 L3.5,9.9 L7.0,9.9 L8.1,9.1 L8.0,6.2 L10.0,5.6 L12.4,7.6 L14.0,7.6 L16.4,5.6 L18.4,6.2 L18.3,9.1 L19.4,9.9 L22.9,9.9 L23.7,11.4 L21.2,13.4 L21.2,14.6z" fill="#f9c84c" stroke="#d9a032" stroke-width="1.600" stroke-linejoin="round"/><ellipse cx="13.900" cy="14.800" rx="3.400" ry="1.800" fill="#c98f1a"/><rect x="11.900" y="2.900" width="4" height="12.600" rx="1.800" fill="#fff" stroke="#9a9a9e" stroke-width="0.900"/></svg><span>服务</span></div>
<div class="hd" style="top:332px">程序包定义</div>
<div class="li" style="top:359px"><svg width="26" height="24" viewBox="0 0 26 24" style=""><path d="M8.5,0.6 h9.5 l6.5,6.5 v13.899999999999999 h-16 z" fill="#fff" stroke="#9a9aa0" stroke-width="1.1" stroke-linejoin="round"/><path d="M18.0,0.6 v6.5 h6.5" fill="#f4f4f4" stroke="#9a9aa0" stroke-width="1.1" stroke-linejoin="round"/><path d="M3.400,11.400 l4.600,1.600 l7,-2.800 v9.800 l-7,3.400 l-4.600,-2.200 z" fill="#f9b96a" stroke="#c26a12" stroke-width="1" stroke-linejoin="round"/><path d="M8,13 l7,-2.800 v9.800 l-7,3.400 z" fill="#ee9a3c" stroke="#c26a12" stroke-width="1" stroke-linejoin="round"/><path d="M3.400,11.400 l-1.600,-2.800 l6,-2.600 l1.800,2.600 z M9.600,8.600 l5.400,-2.400 l2,2.400 l-2,1.600 l-7,2.800 z" fill="#fbc98a" stroke="#c26a12" stroke-width="1" stroke-linejoin="round"/><path d="M5.400,12.600 v9.400" stroke="#fde3c0" stroke-width="1.400"/></svg><span>安装参数</span></div>
<div class="li" style="top:391px"><svg width="26" height="24" viewBox="0 0 26 24" style=""><rect x="9.700" y="0.800" width="5.600" height="5.600" fill="#f4838d" stroke="#e0606c" stroke-width="1"/><path d="M12.500,6.800 v5" fill="none" stroke="#8c8c8c" stroke-width="1"/><path d="M4.200,14.400 v-2.300 h16.600 v2.300" fill="none" stroke="#8c8c8c" stroke-width="1.500"/><rect x="1.700" y="17.800" width="5.400" height="5.400" fill="#8db8f0" stroke="#5b96e6" stroke-width="1"/><rect x="9.800" y="17.800" width="5.400" height="5.400" fill="#8db8f0" stroke="#5b96e6" stroke-width="1"/><rect x="18" y="17.800" width="5.400" height="5.400" fill="#8db8f0" stroke="#5b96e6" stroke-width="1"/></svg><span>组织</span></div>
<div class="li" style="top:423px"><svg width="26" height="24" viewBox="0 0 26 24" style=""><rect x="1.50" y="18.5" width="7.13" height="4.900" fill="#ffcb52" stroke="#c4901c" stroke-width="0.900"/><rect x="8.63" y="18.5" width="7.13" height="4.900" fill="#ffcb52" stroke="#c4901c" stroke-width="0.900"/><rect x="15.76" y="18.5" width="7.13" height="4.900" fill="#ffcb52" stroke="#c4901c" stroke-width="0.900"/><rect x="1.50" y="13.6" width="3.56" height="4.900" fill="#ffcb52" stroke="#c4901c" stroke-width="0.900"/><rect x="5.06" y="13.6" width="7.13" height="4.900" fill="#ffcb52" stroke="#c4901c" stroke-width="0.900"/><rect x="12.20" y="13.6" width="7.13" height="4.900" fill="#ffcb52" stroke="#c4901c" stroke-width="0.900"/><rect x="19.32" y="13.6" width="3.56" height="4.900" fill="#ffcb52" stroke="#c4901c" stroke-width="0.900"/><rect x="1.50" y="8.7" width="7.13" height="4.900" fill="#ffcb52" stroke="#c4901c" stroke-width="0.900"/><rect x="8.63" y="8.7" width="7.13" height="4.900" fill="#ffcb52" stroke="#c4901c" stroke-width="0.900"/><rect x="5.20" y="3.8" width="7.60" height="4.900" fill="#ffcb52" stroke="#c4901c" stroke-width="0.900"/><rect x="16.30" y="0.5" width="7.40" height="4.900" fill="#ffcb52" stroke="#c4901c" stroke-width="0.900"/></svg><span>构建</span></div>
<div class="li" style="top:455px"><svg width="26" height="24" viewBox="0 0 26 24" style=""><rect x="1.400" y="0.700" width="23" height="22.700" rx="3.200" fill="#3f4257"/><path d="M1.400,14.600 l5.400,-3 l4.600,3.800 l6.600,-6.400 l6.400,5 v6.200 q0,3.200 -3.200,3.200 h-16.600 q-3.200,0 -3.200,-3.200 z" fill="#e04c3c"/><path d="M1.800,14.600 l5,-3 l4.600,3.800 l6.600,-6.400 l6,4.800" fill="none" stroke="#fff" stroke-width="1.300"/><circle cx="6.800" cy="11.600" r="1.700" fill="#fff"/><circle cx="11.400" cy="15.400" r="1.700" fill="#fff"/><circle cx="18" cy="9" r="1.700" fill="#fff"/><circle cx="6.800" cy="11.600" r="0.700" fill="#e04c3c"/><circle cx="11.400" cy="15.400" r="0.700" fill="#e04c3c"/><circle cx="18" cy="9" r="0.700" fill="#e04c3c"/></svg><span style="font-weight:bold">分析</span></div>
<div class="hd" style="top:490px">必要条件</div>
<div class="li" style="top:517px"><svg width="26" height="24" viewBox="0 0 26 24" style=""><rect x="1.900" y="3.400" width="8" height="8" fill="#fff" stroke="#8c8c8c" stroke-width="1.100"/><rect x="1.900" y="15.200" width="8" height="8" fill="#fff" stroke="#8c8c8c" stroke-width="1.100"/><path d="M17.600,7.800 h5.600 M17.600,11.600 h5.600 M17.600,18.400 h5.600 M17.600,22.400 h5.600" stroke="#8c8c8c" stroke-width="1.100"/><path d="M3.400,5.400 l2.200,-1.800 l2.400,2.800 l6.600,-6.400 l2.200,2 l-8.800,8.600 z" fill="#4fb416"/></svg><span>先决条件</span></div>
<div class="li" style="top:549px"><svg width="26" height="24" viewBox="0 0 26 24" style=""><path d="M6,0.500 h14" stroke="#8c8c8c" stroke-width="1" fill="none"/></svg><span></span></div>
</div>
<div id="sb"><div id="sbthumb"></div><svg class="abs" style="left:3px;top:5px" width="9" height="8" viewBox="0 0 9 8"><path d="M1.200,6 L4.500,2.400 L7.800,6" fill="none" stroke="#484848" stroke-width="1.900"/></svg><svg class="abs" style="left:3px;top:632px" width="9" height="8" viewBox="0 0 9 8"><path d="M1.200,1.800 L4.500,5.400 L7.800,1.800" fill="none" stroke="#484848" stroke-width="1.900"/></svg></div>
<div id="ps">Project Summary</div>
</div>
<div id="main">
<div id="tbox"></div><div id="title">文件、文件夹和快捷方式</div>
<div id="fsearch"><svg class="abs" style="left:3px;top:2px" width="14" height="14" viewBox="0 0 14 14"><circle cx="5.600" cy="5.600" r="3.900" fill="none" stroke="#555" stroke-width="1.700"/><path d="M8.400,8.600 L12.400,12.600" stroke="#555" stroke-width="2.200"/></svg><span class="abs" style="left:18px;top:0">搜索文件</span></div>
<div id="fhdr">文件夹</div>
<div id="tree">
<div class="tr" style="left:0;top:0px;width:260px"><svg style="left:2px" width="18" height="16" viewBox="0 0 18 16"><rect x="1" y="1.600" width="15.600" height="10" fill="#3fa9f5" stroke="#6f86a8" stroke-width="0.900"/><path d="M1.500,2 h14.600 v5 q-7,3 -14.600,2 z" fill="#7fd0fb"/><path d="M5,13.400 h7.600" stroke="#8aa0c0" stroke-width="1.400"/><path d="M1,15.400 h15.600" stroke="#6f86a8" stroke-width="1"/></svg><span class="k" style="left:24px">目标计算机</span></div>
<div class="tr" style="left:0;top:20px;width:266px"><svg style="left:5px;top:4px" width="12" height="12" viewBox="0 0 12 12"><path d="M1.700,3.600 L6,7.900 L10.300,3.600" fill="none" stroke="#404040" stroke-width="1.600"/></svg><svg style="left:24px" width="14" height="17" viewBox="0 0 14 17"><path d="M0.500,0.500 h11.400 v8.700 h1.100 v6.500 h-12.500 z" fill="url(#fg)" stroke="#efc84a" stroke-width="1"/><path d="M11,9.600 v5.600" stroke="#efc84a" stroke-width="1"/></svg><span class="k" style="left:43px">应用程序文件夹</span></div>
<div class="tr" style="left:0;top:40px;width:266px"><svg style="left:24px;top:4px" width="12" height="12" viewBox="0 0 12 12"><path d="M3.800,1.700 L8.100,6 L3.800,10.300" fill="none" stroke="#a3a3a3" stroke-width="1.600"/></svg><svg style="left:43px" width="14" height="17" viewBox="0 0 14 17"><path d="M0.500,0.500 h11.400 v8.700 h1.100 v6.500 h-12.500 z" fill="url(#fg)" stroke="#efc84a" stroke-width="1"/><path d="M11,9.600 v5.600" stroke="#efc84a" stroke-width="1"/></svg><span class="k" style="left:62px"><i>node_modules</i></span></div>
<div class="tr" style="left:0;top:60px;width:266px"><svg style="left:43px" width="14" height="17" viewBox="0 0 14 17"><path d="M0.500,0.500 h11.400 v8.700 h1.100 v6.500 h-12.500 z" fill="url(#fg)" stroke="#efc84a" stroke-width="1"/><path d="M11,9.600 v5.600" stroke="#efc84a" stroke-width="1"/></svg><span class="g" style="left:62px"><i>node-cache</i></span></div>
<div class="tr" style="left:0;top:80px;width:266px"><div class="abs" style="left:39px;top:0;width:99px;height:20px;background:#d9d9d9"></div><svg style="left:43px" width="14" height="17" viewBox="0 0 14 17"><path d="M0.500,0.500 h11.400 v8.700 h1.100 v6.500 h-12.500 z" fill="url(#fg)" stroke="#efc84a" stroke-width="1"/><path d="M11,9.600 v5.600" stroke="#efc84a" stroke-width="1"/></svg><span class="g" style="left:62px"><i>node-global</i></span></div>
<div class="tr" style="left:0;top:100px;width:266px"><svg style="left:24px" width="14" height="17" viewBox="0 0 14 17"><path d="M0.500,0.500 h11.400 v8.700 h1.100 v6.500 h-12.500 z" fill="url(#fg)" stroke="#efc84a" stroke-width="1"/><path d="M11,9.600 v5.600" stroke="#efc84a" stroke-width="1"/></svg><span class="k" style="left:43px">应用程序快捷方式文件夹</span></div>
<div class="tr" style="left:0;top:120px;width:266px"><svg style="left:5px;top:4px" width="12" height="12" viewBox="0 0 12 12"><path d="M3.800,1.700 L8.100,6 L3.800,10.300" fill="none" stroke="#a3a3a3" stroke-width="1.600"/></svg><svg style="left:24px" width="14" height="17" viewBox="0 0 14 17"><path d="M0.500,0.500 h11.400 v8.700 h1.100 v6.500 h-12.500 z" fill="url(#fg)" stroke="#efc84a" stroke-width="1"/><path d="M11,9.600 v5.600" stroke="#efc84a" stroke-width="1"/></svg><span class="g" style="left:43px">程序文件</span></div>
<div class="tr" style="left:0;top:140px;width:266px"><svg style="left:5px;top:4px" width="12" height="12" viewBox="0 0 12 12"><path d="M3.800,1.700 L8.100,6 L3.800,10.300" fill="none" stroke="#a3a3a3" stroke-width="1.600"/></svg><svg style="left:24px" width="14" height="17" viewBox="0 0 14 17"><path d="M0.500,0.500 h11.400 v8.700 h1.100 v6.500 h-12.500 z" fill="url(#fg)" stroke="#efc84a" stroke-width="1"/><path d="M11,9.600 v5.600" stroke="#efc84a" stroke-width="1"/></svg><span class="g" style="left:43px">程序文件 <i>64</i></span></div>
<div class="tr" style="left:0;top:160px;width:266px"><svg style="left:5px;top:4px" width="12" height="12" viewBox="0 0 12 12"><path d="M3.800,1.700 L8.100,6 L3.800,10.300" fill="none" stroke="#a3a3a3" stroke-width="1.600"/></svg><svg style="left:24px" width="14" height="17" viewBox="0 0 14 17"><path d="M0.500,0.500 h11.400 v8.700 h1.100 v6.500 h-12.500 z" fill="url(#fg)" stroke="#efc84a" stroke-width="1"/><path d="M11,9.600 v5.600" stroke="#efc84a" stroke-width="1"/></svg><span class="g" style="left:43px"><i>Windows</i> 卷</span></div>
<div class="tr" style="left:0;top:180px;width:266px"><svg style="left:24px" width="14" height="17" viewBox="0 0 14 17"><path d="M0.500,0.500 h11.400 v8.700 h1.100 v6.500 h-12.500 z" fill="url(#fg)" stroke="#efc84a" stroke-width="1"/><path d="M11,9.600 v5.600" stroke="#efc84a" stroke-width="1"/></svg><span class="g" style="left:43px">桌面</span></div>
<div class="tr" style="left:0;top:200px;width:266px"><svg style="left:24px" width="14" height="17" viewBox="0 0 14 17"><path d="M0.500,0.500 h11.400 v8.700 h1.100 v6.500 h-12.500 z" fill="url(#fg)" stroke="#efc84a" stroke-width="1"/><path d="M11,9.600 v5.600" stroke="#efc84a" stroke-width="1"/></svg><span class="g" style="left:43px">公共应用程序数据<i>(ProgramData)</i></span></div>
<div class="tr" style="left:0;top:220px;width:266px"><svg style="left:5px;top:4px" width="12" height="12" viewBox="0 0 12 12"><path d="M3.800,1.700 L8.100,6 L3.800,10.300" fill="none" stroke="#a3a3a3" stroke-width="1.600"/></svg><svg style="left:24px" width="14" height="17" viewBox="0 0 14 17"><path d="M0.500,0.500 h11.400 v8.700 h1.100 v6.500 h-12.500 z" fill="url(#fg)" stroke="#efc84a" stroke-width="1"/><path d="M11,9.600 v5.600" stroke="#efc84a" stroke-width="1"/></svg><span class="g" style="left:43px">开始菜单</span></div>
<div class="tr" style="left:0;top:240px;width:266px"><svg style="left:5px;top:4px" width="12" height="12" viewBox="0 0 12 12"><path d="M1.700,3.600 L6,7.900 L10.300,3.600" fill="none" stroke="#404040" stroke-width="1.600"/></svg><svg style="left:24px" width="14" height="17" viewBox="0 0 14 17"><path d="M0.500,0.500 h11.400 v8.700 h1.100 v6.500 h-12.500 z" fill="url(#fg)" stroke="#efc84a" stroke-width="1"/><path d="M11,9.600 v5.600" stroke="#efc84a" stroke-width="1"/></svg><span class="g" style="left:43px">用户配置文件</span></div>
<div class="tr" style="left:0;top:260px;width:266px"><svg style="left:43px" width="14" height="17" viewBox="0 0 14 17"><path d="M0.500,0.500 h11.400 v8.700 h1.100 v6.500 h-12.500 z" fill="url(#fg)" stroke="#efc84a" stroke-width="1"/><path d="M11,9.600 v5.600" stroke="#efc84a" stroke-width="1"/></svg><span class="g" style="left:62px">文档</span></div>
<div class="tr" style="left:0;top:280px;width:266px"><svg style="left:43px" width="14" height="17" viewBox="0 0 14 17"><path d="M0.500,0.500 h11.400 v8.700 h1.100 v6.500 h-12.500 z" fill="url(#fg)" stroke="#efc84a" stroke-width="1"/><path d="M11,9.600 v5.600" stroke="#efc84a" stroke-width="1"/></svg><span class="g" style="left:62px">图片</span></div>
<div class="tr" style="left:0;top:300px;width:266px"><svg style="left:43px" width="14" height="17" viewBox="0 0 14 17"><path d="M0.500,0.500 h11.400 v8.700 h1.100 v6.500 h-12.500 z" fill="url(#fg)" stroke="#efc84a" stroke-width="1"/><path d="M11,9.600 v5.600" stroke="#efc84a" stroke-width="1"/></svg><span class="g" style="left:62px">收藏夹</span></div>
<div class="tr" style="left:0;top:320px;width:266px"><svg style="left:43px" width="14" height="17" viewBox="0 0 14 17"><path d="M0.500,0.500 h11.400 v8.700 h1.100 v6.500 h-12.500 z" fill="url(#fg)" stroke="#efc84a" stroke-width="1"/><path d="M11,9.600 v5.600" stroke="#efc84a" stroke-width="1"/></svg><span class="g" style="left:62px">应用程序数据</span></div>
<div class="tr" style="left:0;top:340px;width:266px"><svg style="left:43px" width="14" height="17" viewBox="0 0 14 17"><path d="M0.500,0.500 h11.400 v8.700 h1.100 v6.500 h-12.500 z" fill="url(#fg)" stroke="#efc84a" stroke-width="1"/><path d="M11,9.600 v5.600" stroke="#efc84a" stroke-width="1"/></svg><span class="g" style="left:62px">本地应用程序数据<i>(Local)</i></span></div>
<div class="tr" style="left:0;top:360px;width:266px"><svg style="left:43px" width="14" height="17" viewBox="0 0 14 17"><path d="M0.500,0.500 h11.400 v8.700 h1.100 v6.500 h-12.500 z" fill="url(#fg)" stroke="#efc84a" stroke-width="1"/><path d="M11,9.600 v5.600" stroke="#efc84a" stroke-width="1"/></svg><span class="g" style="left:62px">网络快捷方式</span></div>
<div class="tr" style="left:0;top:380px;width:266px"><svg style="left:43px" width="14" height="17" viewBox="0 0 14 17"><path d="M0.500,0.500 h11.400 v8.700 h1.100 v6.500 h-12.500 z" fill="url(#fg)" stroke="#efc84a" stroke-width="1"/><path d="M11,9.600 v5.600" stroke="#efc84a" stroke-width="1"/></svg><span class="g" style="left:62px">最近项目</span></div>
<div class="tr" style="left:0;top:400px;width:266px"><svg style="left:43px" width="14" height="17" viewBox="0 0 14 17"><path d="M0.500,0.500 h11.400 v8.700 h1.100 v6.500 h-12.500 z" fill="url(#fg)" stroke="#efc84a" stroke-width="1"/><path d="M11,9.600 v5.600" stroke="#efc84a" stroke-width="1"/></svg><span class="g" style="left:62px">打印机快捷方式</span></div>
<div class="tr" style="left:0;top:420px;width:266px"><svg style="left:43px" width="14" height="17" viewBox="0 0 14 17"><path d="M0.500,0.500 h11.400 v8.700 h1.100 v6.500 h-12.500 z" fill="url(#fg)" stroke="#efc84a" stroke-width="1"/><path d="M11,9.600 v5.600" stroke="#efc84a" stroke-width="1"/></svg><span class="g" style="left:62px">发送到</span></div>
<div class="tr" style="left:0;top:440px;width:266px"><svg style="left:43px" width="14" height="17" viewBox="0 0 14 17"><path d="M0.500,0.500 h11.400 v8.700 h1.100 v6.500 h-12.500 z" fill="url(#fg)" stroke="#efc84a" stroke-width="1"/><path d="M11,9.600 v5.600" stroke="#efc84a" stroke-width="1"/></svg><span class="g" style="left:62px"><i>Windows</i> 库</span></div>
<div class="tr" style="left:0;top:460px;width:266px"><svg style="left:24px" width="14" height="17" viewBox="0 0 14 17"><path d="M0.500,0.500 h11.400 v8.700 h1.100 v6.500 h-12.500 z" fill="url(#fg)" stroke="#efc84a" stroke-width="1"/><path d="M11,9.600 v5.600" stroke="#efc84a" stroke-width="1"/></svg><span class="g" style="left:43px">模板</span></div>
<div class="tr" style="left:0;top:480px;width:266px"><svg style="left:24px" width="14" height="17" viewBox="0 0 14 17"><path d="M0.500,0.500 h11.400 v8.700 h1.100 v6.500 h-12.500 z" fill="url(#fg)" stroke="#efc84a" stroke-width="1"/><path d="M11,9.600 v5.600" stroke="#efc84a" stroke-width="1"/></svg><span class="g" style="left:43px">管理工具</span></div>
<div class="tr" style="left:0;top:500px;width:266px"><svg style="left:5px;top:4px" width="12" height="12" viewBox="0 0 12 12"><path d="M1.700,3.600 L6,7.900 L10.300,3.600" fill="none" stroke="#404040" stroke-width="1.600"/></svg><svg style="left:24px" width="14" height="17" viewBox="0 0 14 17"><path d="M0.500,0.500 h11.400 v8.700 h1.100 v6.500 h-12.500 z" fill="url(#fg)" stroke="#efc84a" stroke-width="1"/><path d="M11,9.600 v5.600" stroke="#efc84a" stroke-width="1"/></svg><span class="g" style="left:43px">公有</span></div>
<div class="tr" style="left:0;top:520px;width:266px"><svg style="left:43px" width="14" height="17" viewBox="0 0 14 17"><path d="M0.500,0.500 h11.400 v8.700 h1.100 v6.500 h-12.500 z" fill="url(#fg)" stroke="#efc84a" stroke-width="1"/><path d="M11,9.600 v5.600" stroke="#efc84a" stroke-width="1"/></svg><span class="g" style="left:62px">公共文档</span></div>
<div class="tr" style="left:0;top:540px;width:266px"><svg style="left:24px" width="14" height="17" viewBox="0 0 14 17"><path d="M0.500,0.500 h11.400 v8.700 h1.100 v6.500 h-12.500 z" fill="url(#fg)" stroke="#efc84a" stroke-width="1"/><path d="M11,9.600 v5.600" stroke="#efc84a" stroke-width="1"/></svg><span class="g" style="left:43px"><i>IIS WWW</i> 根</span></div>
</div>
<div id="split2"></div><div id="list">
<div class="col" style="left:0;width:160px"></div><div class="colh" style="left:0;width:160px"></div>
<div class="col" style="left:0;width:260px"></div><div class="colh" style="left:0;width:260px"></div>
<div class="col" style="left:0;width:360px"></div><div class="colh" style="left:0;width:360px"></div>
<div class="col" style="left:0;width:460px"></div><div class="colh" style="left:0;width:460px"></div>
<div class="col" style="left:0;width:620px"></div><div class="colh" style="left:0;width:620px"></div>
<div class="col" style="left:0;width:780px"></div><div class="colh" style="left:0;width:780px"></div>
<div class="ch" style="left:6px">名称</div>
<div class="ch" style="left:266px">类型</div>
<div class="ch" style="left:366px">版本</div>
<div class="ch" style="left:466px">来源</div>
<div class="ch" style="left:626px">项目路径</div>
<div class="ch" style="left:159px;width:94px;text-align:right">大小</div>
</div>
</div>
<div id="status"><span class="abs" style="left:2px;top:0">完整路径: <i>APPDIR\node-global</i></span>
<div class="abs" style="left:1370px;top:2px;width:1px;height:18px;background:#d8d8d8"></div>
<div class="abs" style="left:1419px;top:2px;width:1px;height:18px;background:#d8d8d8"></div>
<svg class="abs" style="left:1374px;top:2px" width="17" height="17" viewBox="0 0 17 17"><circle cx="8.500" cy="8.500" r="8" fill="#5b8fd9"/><rect x="7.500" y="3.400" width="2" height="7" fill="#fff"/><rect x="7.500" y="11.800" width="2" height="2" fill="#fff"/></svg><span class="abs" style="left:1395px;top:0">通知</span></div>
</body></html>
